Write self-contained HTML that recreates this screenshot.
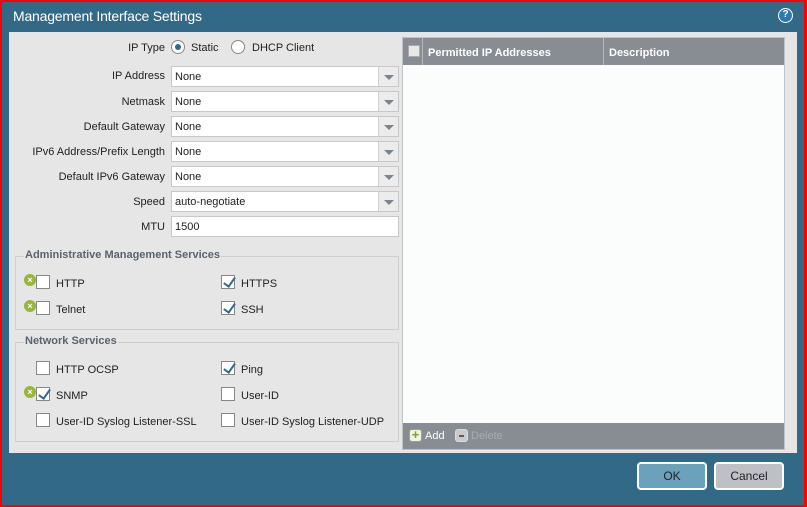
<!DOCTYPE html>
<html><head><style>
*{box-sizing:border-box;margin:0;padding:0}
body{width:807px;height:507px;overflow:hidden;background:#326986;font-family:"Liberation Sans",sans-serif;font-size:11px;color:#222;position:relative}
.frame{position:absolute;left:0;top:0;width:807px;height:507px;border:2px solid #f00;border-right-width:3px}
.title{position:absolute;left:13px;top:8px;color:#fff;font-size:14px;font-family:"Liberation Sans",sans-serif;letter-spacing:-0.2px}
.help{position:absolute;left:778px;top:8px;width:15px;height:15px;border-radius:50%;background:#2a7ab0;border:1.5px solid #fff;color:#fff;font-size:10px;font-weight:bold;text-align:center;line-height:12px}
.panel{position:absolute;left:9px;top:32px;width:788px;height:421px;background:#e6e6e6}
.lbl{position:absolute;right:642px;font-size:11px;text-align:right;white-space:nowrap;margin-top:1px}
.inp{position:absolute;left:171px;width:228px;height:21px;background:#fff;border:1px solid #c8c8c8;padding-left:3px;line-height:21px}
.inp .dd{position:absolute;right:0;top:0;width:20px;height:19px;border-left:1px solid #d0d0d0;background:#ececec}
.inp .dd:after{content:"";position:absolute;left:5px;top:8px;border-left:5px solid transparent;border-right:5px solid transparent;border-top:5px solid #7a8590}
.radio{position:absolute;width:14px;height:14px;border-radius:50%;background:#fff;border:1px solid #888}
.radio.on:after{content:"";position:absolute;left:3px;top:3px;width:6px;height:6px;border-radius:50%;background:#336a87}
.fs{position:absolute;left:15px;width:384px;border:1px solid #cfcfcf}
.leg{position:absolute;left:8px;top:-8px;background:#e6e6e6;font-weight:bold;color:#5a6470;padding:0 1px;font-size:11px}
.cb{position:absolute;width:14px;height:14px;background:#fff;border:1px solid #888}
.cb.on:after{content:"";position:absolute;left:4px;top:-1px;width:5px;height:10px;border:solid #336a87;border-width:0 2.5px 2.5px 0;transform:rotate(35deg)}
.x{position:absolute;width:12px;height:12px;border-radius:50%;background:#98b63a;color:#fff;font-size:9px;font-weight:bold;text-align:center;line-height:12px}
.t{position:absolute;white-space:nowrap;margin-top:1px}
.tbl{position:absolute;left:402px;top:37px;width:383px;height:413px;background:#fbfcfc;border:1px solid #bfc3c6}
.th{position:absolute;left:0;top:0;width:381px;height:27px;background:#878d93;color:#fff}
.tf{position:absolute;left:0;bottom:0;width:381px;height:26px;background:#878d93;color:#fff}
.btn{position:absolute;top:462px;width:70px;height:28px;border:2px solid #fff;border-radius:4px;text-align:center;line-height:25px;font-size:12px}
</style></head><body>
<div class="title">Management Interface Settings</div>
<div class="help">?</div>
<div class="panel"></div>
<div class="lbl" style="top:41px">IP Type</div>
<div class="radio on" style="left:171px;top:40px"></div><div class="t" style="left:191px;top:41px">Static</div>
<div class="radio" style="left:231px;top:40px"></div><div class="t" style="left:252px;top:41px">DHCP Client</div>

<div class="lbl" style="top:69px">IP Address</div><div class="inp" style="top:66px">None<div class="dd"></div></div>
<div class="lbl" style="top:95px">Netmask</div><div class="inp" style="top:91px">None<div class="dd"></div></div>
<div class="lbl" style="top:120px">Default Gateway</div><div class="inp" style="top:116px">None<div class="dd"></div></div>
<div class="lbl" style="top:145px">IPv6 Address/Prefix Length</div><div class="inp" style="top:141px">None<div class="dd"></div></div>
<div class="lbl" style="top:170px">Default IPv6 Gateway</div><div class="inp" style="top:166px">None<div class="dd"></div></div>
<div class="lbl" style="top:195px">Speed</div><div class="inp" style="top:191px">auto-negotiate<div class="dd"></div></div>
<div class="lbl" style="top:220px">MTU</div><div class="inp" style="top:216px">1500</div>

<div class="fs" style="top:256px;height:74px"><div class="leg">Administrative Management Services</div></div>
<div class="x" style="left:24px;top:274px">×</div><div class="cb" style="left:36px;top:275px"></div><div class="t" style="left:56px;top:277px">HTTP</div>
<div class="cb on" style="left:221px;top:275px"></div><div class="t" style="left:241px;top:277px">HTTPS</div>
<div class="x" style="left:24px;top:300px">×</div><div class="cb" style="left:36px;top:301px"></div><div class="t" style="left:56px;top:303px">Telnet</div>
<div class="cb on" style="left:221px;top:301px"></div><div class="t" style="left:241px;top:303px">SSH</div>

<div class="fs" style="top:342px;height:100px"><div class="leg">Network Services</div></div>
<div class="cb" style="left:36px;top:361px"></div><div class="t" style="left:56px;top:363px">HTTP OCSP</div>
<div class="cb on" style="left:221px;top:361px"></div><div class="t" style="left:241px;top:363px">Ping</div>
<div class="x" style="left:24px;top:386px">×</div><div class="cb on" style="left:36px;top:387px"></div><div class="t" style="left:56px;top:389px">SNMP</div>
<div class="cb" style="left:221px;top:387px"></div><div class="t" style="left:241px;top:389px">User-ID</div>
<div class="cb" style="left:36px;top:413px"></div><div class="t" style="left:56px;top:415px">User-ID Syslog Listener-SSL</div>
<div class="cb" style="left:221px;top:413px"></div><div class="t" style="left:241px;top:415px">User-ID Syslog Listener-UDP</div>

<div class="tbl">
 <div class="th">
  <div style="position:absolute;left:5px;top:7px;width:12px;height:12px;background:#e8e8e8;border:1px solid #aaa"></div>
  <div style="position:absolute;left:19px;top:0;width:1px;height:27px;background:#b5b9bd"></div>
  <div class="t" style="left:25px;top:8px;font-weight:bold">Permitted IP Addresses</div>
  <div style="position:absolute;left:200px;top:0;width:1px;height:27px;background:#b5b9bd"></div>
  <div class="t" style="left:206px;top:8px;font-weight:bold">Description</div>
 </div>
 <div class="tf">
  <div style="position:absolute;left:6px;top:6px;width:13px;height:13px;border-radius:3px;background:#f0f0e8;border:1px solid #98b63a;color:#7fa02a;font-weight:bold;font-size:13px;line-height:10px;text-align:center">+</div>
  <div class="t" style="left:22px;top:6px">Add</div>
  <div style="position:absolute;left:52px;top:6px;width:13px;height:13px;border-radius:3px;background:#c8cacc;border:1px solid #ddd"><div style="position:absolute;left:3px;top:5px;width:5px;height:2px;background:#7a5040"></div></div>
  <div class="t" style="left:68px;top:6px;color:#a8adb2">Delete</div>
 </div>
</div>
<div class="btn" style="left:637px;background:#6aa2bb">OK</div>
<div class="btn" style="left:714px;background:#bfc0c6">Cancel</div>
<div class="frame"></div>
</body></html>
